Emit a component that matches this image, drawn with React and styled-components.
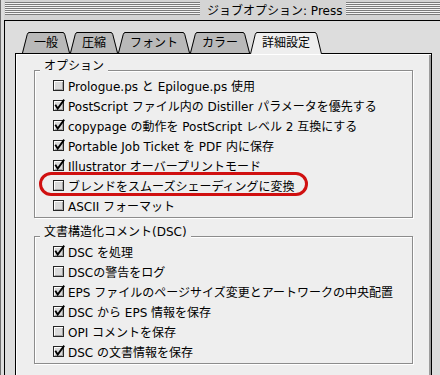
import styled, { createGlobalStyle, css } from "styled-components";

const GlobalStyle = createGlobalStyle`
  html, body {
    margin: 0;
    padding: 0;
    overflow: hidden;
    background: #dddddd;
  }
  body {
    font-family: "DejaVu Sans", "Noto Sans CJK JP", sans-serif;
    font-size: 12px;
    color: #000;
  }
`

const Window = styled.div`
  width: 440px;
  height: 375px;
  box-sizing: border-box;
  display: flex;
  flex-direction: column;
  border-left: 1px solid #6e6e6e;
  padding-left: 3px;
  background: #dddddd;
  overflow: hidden;
`

const TitleBar = styled.div`
  flex: none;
  display: flex;
  height: 20px;
  padding-left: 1px;
  background: #d4d4d4;
`

const Stripes = styled.div`
  flex: ${props => props.$width ? "none" : "1"};
  width: ${props => props.$width || 0}px;
  height: 13px;
  margin-top: 2px;
  background: repeating-linear-gradient(to bottom, #7c7c7c 0 1px, #f4f4f4 1px 2px);
`

const Title = styled.div`
  padding: 0 4px 0 7px;
  line-height: 22px;
  white-space: nowrap;
`

const Content = styled.div`
  flex: 1;
  border-top: 1px solid #000;
  border-left: 1px solid #000;
  padding: 11px 0 0 10px;
`

const TabRow = styled.div`
  display: flex;
  align-items: flex-start;
  height: 21px;
  margin-left: 7px;
`

const TabItem = styled.div`
  display: flex;
  height: ${props => props.$active ? 22 : 21}px;
  position: relative;
  z-index: ${props => props.$active ? 1 : 0};
`

const TabLabel = styled.div`
  box-sizing: border-box;
  height: 100%;
  padding: 0 5px;
  border-top: 1px solid #000;
  background: ${props => props.$active ? "#eeeeee" : "#b9b9b9"};
  line-height: 20px;
  white-space: nowrap;
`

const Edge = styled.svg`
  display: block;
  flex: none;
  transform: ${props => props.$flip ? "scaleX(-1)" : "none"};
`

const TabEdge = ({ h, fill, flip }) => (
  <Edge $flip={flip} width="7" height={h} viewBox={`0 0 7 ${h}`}>
    <path d={`M0 ${h} L5 2.6 Q5.8 0.5 7 0.5 V${h} Z`} fill={fill} />
    <path d={`M0.5 ${h} L5.2 2.6 Q5.9 0.5 7 0.5`} fill="none" stroke="#000" />
  </Edge>
)

const Tab = ({ label, active }) => {
  const h = active ? 22 : 21;
  const fill = active ? "#eeeeee" : "#b9b9b9";
  return (
    <TabItem $active={active}>
      <TabEdge h={h} fill={fill} />
      <TabLabel $active={active}>{label}</TabLabel>
      <TabEdge h={h} fill={fill} flip />
    </TabItem>
  );
}

const Panel = styled.div`
  width: 417px;
  box-sizing: border-box;
  border: 1px solid #000;
  border-bottom: none;
  background: #eeeeee;
  padding: 5px 18px 30px 18px;
  box-shadow: inset 1px 1px 0 #ffffff, inset -2px 0 0 #9c9c9c;
`

const Group = styled.fieldset`
  margin: ${props => props.$first ? 0 : 7}px 0 0;
  padding: 0 0 2px;
  min-inline-size: auto;
  border: 1px solid #8c8c8c;
  box-shadow: 1px 1px 0 #ffffff, inset 1px 1px 0 #ffffff;
`

const Legend = styled.legend`
  margin-left: 5px;
  padding: 1px 4px 10px;
  line-height: 12px;
  background: #eeeeee;
  white-space: nowrap;
`

const OptionList = styled.div`
  display: flex;
  flex-direction: column;
  margin-top: -7px;
  padding-left: 18px;
`

const Row = styled.label`
  position: relative;
  display: flex;
  align-items: center;
  gap: 3px;
  height: 20px;
  white-space: nowrap;

  ${props => props.$circled && css`
    &::after {
      content: "";
      position: absolute;
      left: -14px;
      top: -3px;
      width: 269px;
      height: 24px;
      box-sizing: border-box;
      border: 3px solid #d01010;
      border-radius: 12px;
    }
  `}
`

const Box = styled.svg`
  display: block;
  flex: none;
  overflow: visible;
`

const CheckBox = ({ checked }) => (
  <Box width="12" height="12" viewBox="0 0 12 12">
    <rect x="0.5" y="1.5" width="10" height="10" fill="#dadada" stroke="#262626" />
    <path d="M1.5 10 V2.5 H10" fill="none" stroke="#ffffff" />
    <path d="M9.5 3 V10.5 H2" fill="none" stroke="#a4a4a4" />
    {checked && (
      <path d="M2.3 5.8 L4.7 9.6 L11.2 0.6" fill="none" stroke="#000" strokeWidth="1.8" />
    )}
  </Box>
)

const options = [
  { text: "Prologue.ps と Epilogue.ps 使用", checked: false },
  { text: "PostScript ファイル内の Distiller パラメータを優先する", checked: true },
  { text: "copypage の動作を PostScript レベル 2 互換にする", checked: true },
  { text: "Portable Job Ticket を PDF 内に保存", checked: true },
  { text: "Illustrator オーバープリントモード", checked: true },
  { text: "ブレンドをスムーズシェーディングに変換", checked: false, circled: true },
  { text: "ASCII フォーマット", checked: false },
]

const dscOptions = [
  { text: "DSC を処理", checked: true },
  { text: "DSCの警告をログ", checked: false },
  { text: "EPS ファイルのページサイズ変更とアートワークの中央配置", checked: true },
  { text: "DSC から EPS 情報を保存", checked: true },
  { text: "OPI コメントを保存", checked: false },
  { text: "DSC の文書情報を保存", checked: true },
]

const tabs = ["一般", "圧縮", "フォント", "カラー", "詳細設定"]

const OptionGroup = ({ title, items, first }) => (
  <Group $first={first}>
    <Legend>{title}</Legend>
    <OptionList>
      {items.map((item, index) => (
        <Row key={index} $circled={item.circled}>
          <CheckBox checked={item.checked} />
          <span>{item.text}</span>
        </Row>
      ))}
    </OptionList>
  </Group>
)

const App = () => {
  return (
    <>
      <GlobalStyle />
      <Window>
        <TitleBar>
          <Stripes $width={195} />
          <Title>ジョブオプション: Press</Title>
          <Stripes />
        </TitleBar>
        <Content>
          <TabRow>
            {tabs.map((label, index) => (
              <Tab key={label} label={label} active={index === tabs.length - 1} />
            ))}
          </TabRow>
          <Panel>
            <OptionGroup title="オプション" items={options} first />
            <OptionGroup title="文書構造化コメント(DSC)" items={dscOptions} />
          </Panel>
        </Content>
      </Window>
    </>
  )
}

export default App
